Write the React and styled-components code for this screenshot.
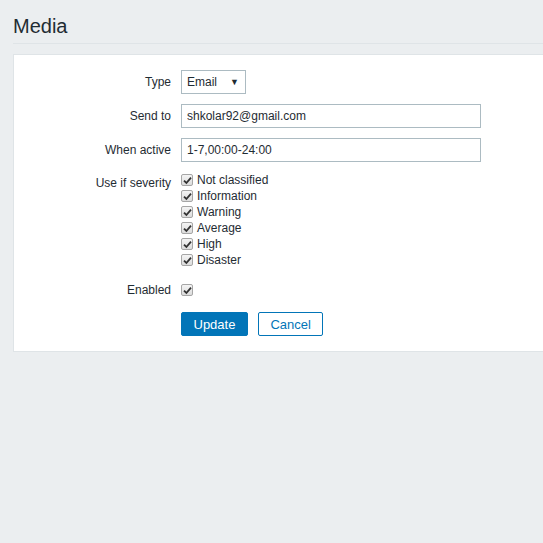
import React from 'react'
import styled, { createGlobalStyle } from 'styled-components'

const GlobalStyle = createGlobalStyle`
  html, body {
    margin: 0;
    padding: 0;
    background: #ebeef0;
    font-family: Arial, "Liberation Sans", sans-serif;
    font-size: 12px;
    color: #1f2c33;
    overflow: hidden;
  }
`

const Page = styled.div`
  padding-left: 13px;
  min-height: 543px;
`

const Header = styled.div`
  padding-top: 14px;
  padding-bottom: 5px;
  border-bottom: 1px solid #dfe4e7;
  margin-right: -20px;
`

const Title = styled.h1`
  margin: 0;
  font-size: 20px;
  font-weight: normal;
  line-height: 24px;
  color: #1f2c33;
`

const Panel = styled.div`
  margin-top: 10px;
  margin-right: -20px;
  background: #fff;
  border: 1px solid #dfe4e7;
  padding: 15px 0;
`

const FormGrid = styled.div`
  display: grid;
  grid-template-columns: 157px 1fr;
  column-gap: 10px;
  row-gap: 10px;
`

const Label = styled.div`
  text-align: right;
  align-self: ${p => (p.top ? 'start' : 'center')};
  padding-top: ${p => (p.top ? '4px' : '0')};
  line-height: 14px;
`

const Field = styled.div`
  display: flex;
  align-items: center;
  min-height: 24px;
`

const SelectBox = styled.div`
  box-sizing: border-box;
  width: 65px;
  height: 24px;
  border: 1px solid #acbbc2;
  padding: 0 6px 0 5px;
  display: flex;
  align-items: center;
  justify-content: space-between;
  background: #fff;
`

const Arrow = styled.span`
  font-size: 9px;
  color: #1f2c33;
`

const TextInput = styled.input`
  box-sizing: border-box;
  width: 300px;
  height: 24px;
  border: 1px solid #acbbc2;
  padding: 0 5px;
  font-family: Arial, "Liberation Sans", sans-serif;
  font-size: 12px;
  color: #1f2c33;
  outline: none;
`

const CheckList = styled.div`
  display: flex;
  flex-direction: column;
`

const CheckRow = styled.label`
  display: flex;
  align-items: center;
  height: 16px;
  gap: 4px;
  line-height: 16px;
`

const Box = styled.span`
  box-sizing: border-box;
  width: 12px;
  height: 12px;
  border: 1px solid #a6a6a6;
  border-radius: 2px;
  background: linear-gradient(#f4f4f4, #dcdcdc);
  display: inline-flex;
  align-items: center;
  justify-content: center;
`

const Buttons = styled.div`
  display: flex;
  gap: 10px;
`

const Button = styled.button`
  box-sizing: border-box;
  height: 24px;
  padding: 0 11.5px;
  border: 1px solid #0275b8;
  border-radius: 2px;
  background: ${p => (p.secondary ? '#fff' : '#0275b8')};
  color: ${p => (p.secondary ? '#0275b8' : '#fff')};
  font-family: Arial, "Liberation Sans", sans-serif;
  font-size: 13px;
  cursor: pointer;
`

const Check = () => (
  <Box>
    <svg width="9" height="9" viewBox="0 0 9 9">
      <path d="M1 4.6 L3.4 7 L8 1.6" fill="none" stroke="#333" strokeWidth="1.8" />
    </svg>
  </Box>
)

const severities = ['Not classified', 'Information', 'Warning', 'Average', 'High', 'Disaster']

export default function App() {
  return (
    <Page>
      <GlobalStyle />
      <Header>
        <Title>Media</Title>
      </Header>
      <Panel>
        <FormGrid>
          <Label>Type</Label>
          <Field>
            <SelectBox>
              <span>Email</span>
              <Arrow>▼</Arrow>
            </SelectBox>
          </Field>

          <Label>Send to</Label>
          <Field>
            <TextInput defaultValue="shkolar92@gmail.com" />
          </Field>

          <Label>When active</Label>
          <Field>
            <TextInput defaultValue="1-7,00:00-24:00" />
          </Field>

          <Label top>Use if severity</Label>
          <CheckList>
            {severities.map(s => (
              <CheckRow key={s}>
                <Check />
                <span>{s}</span>
              </CheckRow>
            ))}
          </CheckList>

          <Label>Enabled</Label>
          <Field>
            <Check />
          </Field>

          <div />
          <Buttons>
            <Button>Update</Button>
            <Button secondary>Cancel</Button>
          </Buttons>
        </FormGrid>
      </Panel>
    </Page>
  )
}
